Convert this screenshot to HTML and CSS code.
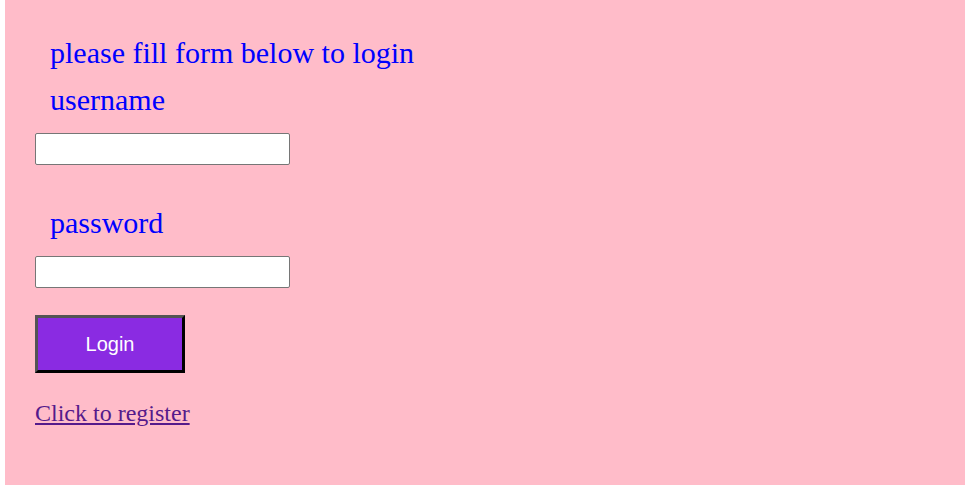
FILE: index.html
```html
<!DOCTYPE html>
<html>
<head>
<meta charset="utf-8">
<link rel="stylesheet" href="styles.css">
</head>
<body>
<div class="panel">
  <form class="login-form">
    <div class="title">please fill form below to login</div>
    <label class="field-label" for="u">username</label>
    <input class="field-input" id="u" type="text">
    <label class="field-label pw" for="p">password</label>
    <input class="field-input" id="p" type="password">
    <button class="login-btn" type="button">Login</button>
    <a class="register-link" href="#">Click to register</a>
  </form>
</div>
</body>
</html>
```
FILE: styles.css
```css
html, body {
  margin: 0;
  padding: 0;
  background: #ffffff;
}
.panel {
  margin-left: 5px;
  width: 960px;
  height: 485px;
  background: #ffbcc9;
  box-sizing: border-box;
  padding: 36px 0 0 30px;
}
.login-form {
  display: flex;
  flex-direction: column;
  align-items: flex-start;
}
.title, .field-label {
  font-family: "Liberation Serif", "Times New Roman", serif;
  font-size: 30px;
  line-height: 34px;
  color: #0000ff;
  margin-left: 15px;
  display: block;
}
.field-label {
  margin-top: 13px;
}
.field-label.pw {
  margin-top: 41px;
}
.field-input {
  margin: 16px 0 0 0;
  width: 255px;
  height: 32px;
  box-sizing: border-box;
  border: 1px solid #767676;
  border-radius: 2px;
  background: #fff;
  padding: 1px 2px;
}
.login-btn {
  margin-top: 27px;
  width: 150px;
  height: 58px;
  box-sizing: border-box;
  background: #8a2be2;
  color: #ffffff;
  font-family: "Liberation Sans", Arial, sans-serif;
  font-size: 20px;
  border: 3px solid;
  border-color: #545454 #000000 #000000 #545454;
  padding: 0;
}
.register-link {
  margin-top: 26px;
  font-family: "Liberation Serif", "Times New Roman", serif;
  font-size: 24px;
  line-height: 28px;
  color: #551a8b;
  text-decoration: underline;
}
```
